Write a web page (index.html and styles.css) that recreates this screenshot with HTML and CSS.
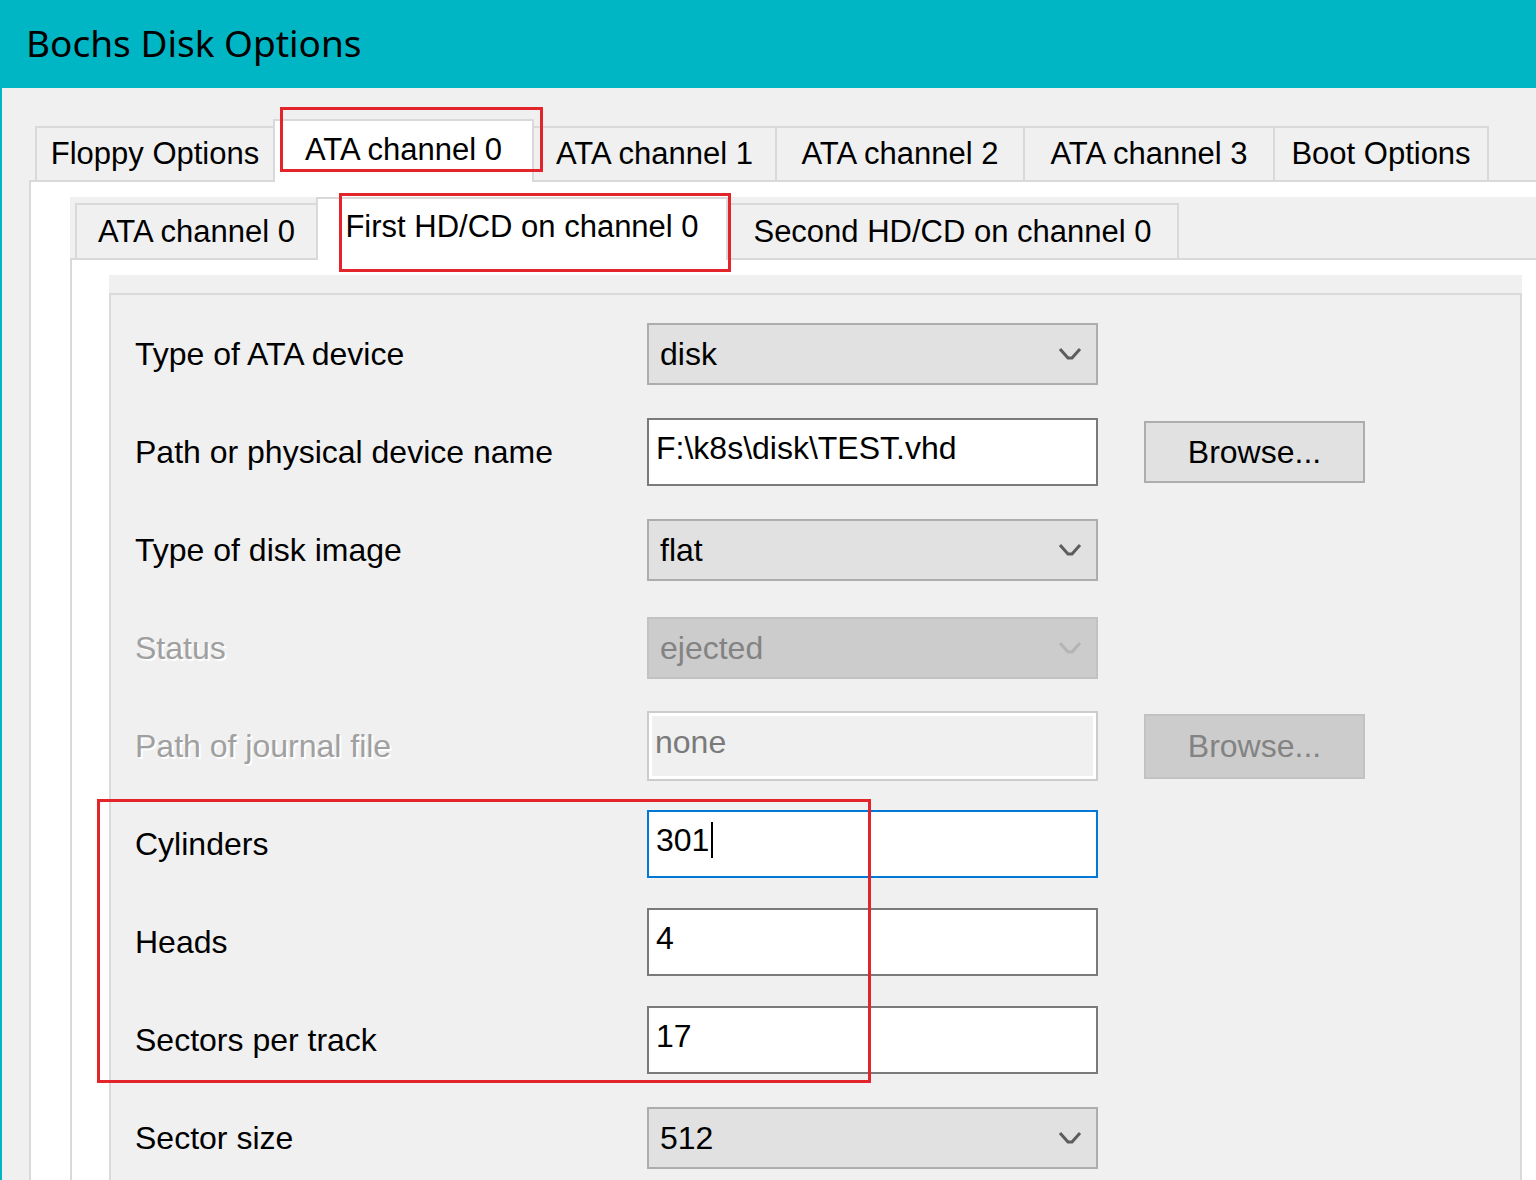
FILE: index.html
```html
<!DOCTYPE html>
<html lang="en">
<head>
    <meta charset="UTF-8">
    <meta name="viewport" content="width=device-width, initial-scale=1.0">
    <title>Bochs Disk Options</title>
    <link rel="stylesheet" href="styles.css">
</head>
<body>
    <div class="window">
        <div class="titlebar">Bochs Disk Options</div>
        <div class="client">
            <!-- outer notebook -->
            <div class="notebook outer">
                <div class="tabs">
                    <div class="tab t-floppy">Floppy Options</div>
                    <div class="tab active t-ata0">ATA channel 0</div>
                    <div class="tab t-ata1">ATA channel 1</div>
                    <div class="tab t-ata2">ATA channel 2</div>
                    <div class="tab t-ata3">ATA channel 3</div>
                    <div class="tab t-boot">Boot Options</div>
                </div>
                <div class="page">
                    <!-- inner notebook -->
                    <div class="notebook inner">
                        <div class="tabs">
                            <div class="tab t-chan">ATA channel 0</div>
                            <div class="tab active t-first">First HD/CD on channel 0</div>
                            <div class="tab t-second">Second HD/CD on channel 0</div>
                        </div>
                        <div class="page">
                            <div class="panel">
                                <div class="box">
                                    <div class="row">
                                        <div class="label">Type of ATA device</div>
                                        <div class="combo"><span>disk</span><svg class="chev" width="24" height="14" viewBox="0 0 24 14"><polyline points="2,2 10,11 14,11 22,2" fill="none" stroke="#5c5c5c" stroke-width="3"/></svg></div>
                                    </div>
                                    <div class="row">
                                        <div class="label">Path or physical device name</div>
                                        <div class="input">F:\k8s\disk\TEST.vhd</div>
                                        <div class="button">Browse...</div>
                                    </div>
                                    <div class="row">
                                        <div class="label">Type of disk image</div>
                                        <div class="combo"><span>flat</span><svg class="chev" width="24" height="14" viewBox="0 0 24 14"><polyline points="2,2 10,11 14,11 22,2" fill="none" stroke="#5c5c5c" stroke-width="3"/></svg></div>
                                    </div>
                                    <div class="row">
                                        <div class="label disabled">Status</div>
                                        <div class="combo disabled"><span>ejected</span><svg class="chev" width="24" height="14" viewBox="0 0 24 14"><polyline points="2,2 10,11 14,11 22,2" fill="none" stroke="#b4b4b4" stroke-width="3"/></svg></div>
                                    </div>
                                    <div class="row">
                                        <div class="label disabled">Path of journal file</div>
                                        <div class="input disabled">none</div>
                                        <div class="button disabled">Browse...</div>
                                    </div>
                                    <div class="row">
                                        <div class="label">Cylinders</div>
                                        <div class="input focus">301<span class="caret"></span></div>
                                    </div>
                                    <div class="row">
                                        <div class="label">Heads</div>
                                        <div class="input">4</div>
                                    </div>
                                    <div class="row">
                                        <div class="label">Sectors per track</div>
                                        <div class="input">17</div>
                                    </div>
                                    <div class="row">
                                        <div class="label">Sector size</div>
                                        <div class="combo"><span>512</span><svg class="chev" width="24" height="14" viewBox="0 0 24 14"><polyline points="2,2 10,11 14,11 22,2" fill="none" stroke="#5c5c5c" stroke-width="3"/></svg></div>
                                    </div>
                                </div>
                            </div>
                        </div>
                    </div>
                </div>
            </div>
        </div>

        <!-- red highlight boxes drawn over the dialog -->
        <div class="mark mark-tab1"></div>
        <div class="mark mark-tab2"></div>
        <div class="mark mark-geom"></div>
    </div>
</body>
</html>
```

FILE: styles.css
```css
body {
    margin: 0;
    overflow: hidden;
    background-color: #f0f0f0;
}
.window {
    position: relative;
    width: 1536px;
    height: 1180px;
    overflow: hidden;
    font-family: "Liberation Sans", Arial, sans-serif;
    font-size: 32px;
    color: #000000;
}
.titlebar {
    height: 88px;
    line-height: 86px;
    padding-left: 26px;
    background: #00b5c4;
    font-family: "Noto Sans", "Open Sans", sans-serif;
    font-size: 37px;
    color: #000000;
}
.client {
    height: 1092px;
    border-left: 2px solid #00b5c4;
    background: #f0f0f0;
}
.notebook.outer {
    margin-left: 27px;
    margin-right: -40px;
}
.tabs {
    display: flex;
    align-items: flex-end;
    box-sizing: border-box;
}
.outer > .tabs {
    height: 92px;
    padding-left: 6px;
}
.tab {
    box-sizing: border-box;
    flex-shrink: 0;
    height: 54px;
    margin-right: -2px;
    display: flex;
    align-items: center;
    justify-content: center;
    white-space: nowrap;
    font-size: 31px;
    background: #f0f0f0;
    border: 2px solid #d9d9d9;
    border-bottom: none;
}
.tab.active {
    position: relative;
    z-index: 1;
    height: 63px;
    margin-bottom: -2px;
    padding-bottom: 4px;
    background: #ffffff;
}
.t-floppy { width: 240px; }
.t-ata0 { width: 261px; }
.t-ata1 { width: 245px; }
.t-ata2 { width: 250px; }
.t-ata3 { width: 252px; }
.t-boot { width: 216px; }
.t-chan { width: 243px; }
.t-first { width: 412px; }
.t-second { width: 453px; }
.page {
    background: #ffffff;
    border-top: 2px solid #d9d9d9;
    border-left: 2px solid #d9d9d9;
}
.outer > .page {
    height: 1000px;
    padding: 15px 0 0 39px;
}
.notebook.inner {
    background: #f0f0f0;
}
.inner > .tabs {
    height: 61px;
    padding-left: 5px;
}
.inner .tab {
    height: 55px;
}
.inner .tab.active {
    height: 63px;
    padding-bottom: 6px;
}
.inner > .page {
    height: 1000px;
    padding: 15px 0 0 37px;
}
.panel {
    width: 1413px;
    height: 1000px;
    padding-top: 18px;
    background: #f0f0f0;
}
.box {
    height: 1000px;
    padding: 10px 0 0 24px;
    border: 2px solid #dadada;
    border-bottom: none;
}
.row {
    display: flex;
    align-items: center;
    height: 98px;
}
.label {
    width: 512px;
    flex-shrink: 0;
    white-space: nowrap;
}
.label.disabled {
    color: #a0a0a0;
    text-shadow: 2px 2px 0 #ffffff;
}
.combo {
    box-sizing: border-box;
    width: 451px;
    height: 62px;
    padding: 0 14px 0 11px;
    display: flex;
    align-items: center;
    justify-content: space-between;
    background: #e1e1e1;
    border: 2px solid #adadad;
}
.combo.disabled {
    background: #cccccc;
    border-color: #c2c2c2;
    color: #838383;
}
.input {
    box-sizing: border-box;
    width: 451px;
    height: 68px;
    padding: 0 7px 8px;
    display: flex;
    align-items: center;
    background: #ffffff;
    border: 2px solid #7a7a7a;
}
.input.focus {
    border-color: #0078d7;
}
.input.disabled {
    height: 70px;
    padding-left: 6px;
    background: #f0f0f0;
    border: 2px solid #cccccc;
    box-shadow: inset 0 0 0 3px #ffffff;
    color: #7a7a7a;
}
.caret {
    display: inline-block;
    width: 2px;
    height: 36px;
    margin-left: 2px;
    background: #000000;
}
.button {
    box-sizing: border-box;
    width: 221px;
    height: 62px;
    margin-left: 46px;
    display: flex;
    align-items: center;
    justify-content: center;
    background: #e1e1e1;
    border: 2px solid #adadad;
}
.button.disabled {
    height: 65px;
    background: #cccccc;
    border-color: #c2c2c2;
    color: #838383;
}
.mark {
    position: absolute;
    border: 3px solid #e3242b;
    pointer-events: none;
    z-index: 5;
}
.mark-tab1 {
    left: 280px;
    top: 107px;
    width: 257px;
    height: 59px;
}
.mark-tab2 {
    left: 339px;
    top: 193px;
    width: 386px;
    height: 73px;
}
.mark-geom {
    left: 97px;
    top: 799px;
    width: 768px;
    height: 278px;
}
```
